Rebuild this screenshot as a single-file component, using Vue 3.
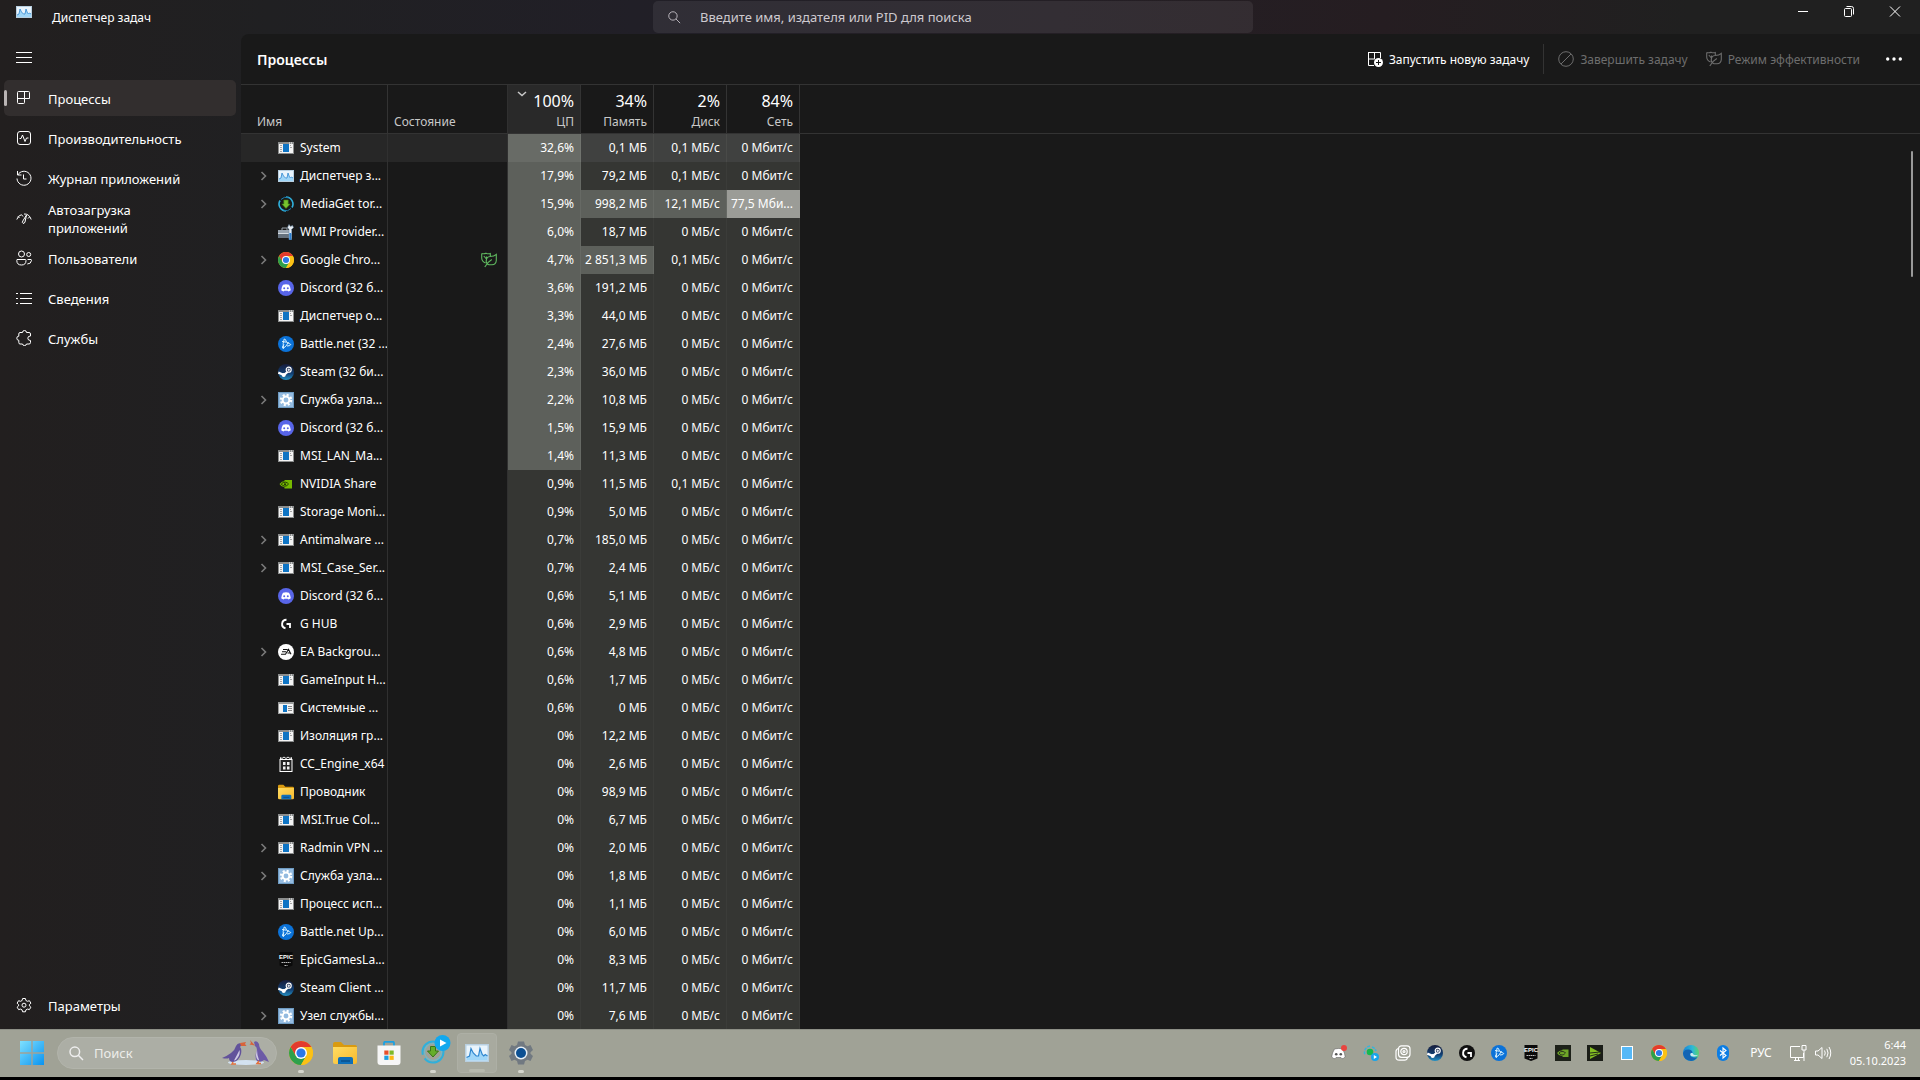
<template>
<svg class="sprite" aria-hidden="true">
    <defs>
        <linearGradient id="winblue" x1="0" y1="0" x2="1" y2="1">
            <stop offset="0" stop-color="#7fe0ff" />
            <stop offset="1" stop-color="#0a93f0" />
        </linearGradient>
        <linearGradient id="steamfill" x1="0" y1="0" x2="0" y2="1">
            <stop offset="0" stop-color="#171d3c" />
            <stop offset="0.6" stop-color="#123f73" />
            <stop offset="1" stop-color="#2391c4" />
        </linearGradient>
        <linearGradient id="folderfill" x1="0" y1="0" x2="1" y2="1">
            <stop offset="0" stop-color="#ffdc62" />
            <stop offset="1" stop-color="#f7b92d" />
        </linearGradient>
        <linearGradient id="edgefill" x1="0" y1="0" x2="1" y2="0">
            <stop offset="0" stop-color="#1684d8" />
            <stop offset="0.6" stop-color="#2fb8d6" />
            <stop offset="1" stop-color="#5bd46a" />
        </linearGradient>
    </defs>

    <!-- process icons -->
    <symbol id="exe" viewBox="0 0 16 16">
        <rect x="0" y="2" width="16" height="12" fill="#8b8d8d" />
        <rect x="1" y="4" width="14" height="9" fill="#f4f4f4" />
        <rect x="5" y="4" width="6" height="8" fill="#0e74c4" />
        <path d="M2 5.500h2M2 7.500h2M2 9.500h2M2 11.500h2M12 5.500h1M12 7.500h2" stroke="#a5a5a5" />
        <path d="M11 3h1M13 3h1" stroke="#fff" />
    </symbol>
    <symbol id="sys" viewBox="0 0 16 16">
        <rect x="0" y="2" width="16" height="12" fill="#9b9d9d" />
        <rect x="1" y="4" width="14" height="9" fill="#f4f4f4" />
        <rect x="5" y="5" width="4" height="7" fill="#0e74c4" />
        <path d="M10 6.500h4M10 8.500h4M10 10.500h4" stroke="#888" />
    </symbol>
    <symbol id="taskmgr" viewBox="0 0 16 16">
        <rect x="0.500" y="2.500" width="15" height="11" fill="#e9f4fc" stroke="#b8cfe0" />
        <path d="M1 11l2-1 1-5 1.500 3 2 2 1.500 0 1-5 1.500 4 1 1 1-1 1.500 1V13H1z" fill="#9fd6f8" />
        <path d="M1 11l2-1 1-5 1.500 3 2 2 1.500 0 1-5 1.500 4 1 1 1-1 1.500 1" fill="none" stroke="#2e86cf" stroke-width="0.800" />
    </symbol>
    <symbol id="mediaget" viewBox="0 0 16 16">
        <path d="M8 1a7 7 0 0 1 6 10.500M8 15A7 7 0 0 1 2 4.500" fill="none" stroke="#2fb0dc" stroke-width="1.600" />
        <path d="M3 3.500A6.700 6.700 0 0 1 10.500 1.800M13 12.500A6.700 6.700 0 0 1 5.500 14.200" fill="none" stroke="#1d7fae" stroke-width="1" />
        <path d="M5.800 4h4.400v4h2L8 12.500 3.800 8h2z" fill="#78c22d" stroke="#3d7d16" stroke-width="0.600" />
    </symbol>
    <symbol id="wmi" viewBox="0 0 16 16">
        <path d="M4 6V4h5v2" fill="none" stroke="#9ba4ac" />
        <rect x="0" y="6" width="14" height="4" fill="#9aa5b0" />
        <rect x="0" y="10" width="14" height="4" fill="#66727e" />
        <path d="M0 9.500h14" stroke="#d4dbe1" />
        <path d="M11 0.500l1.500 2 2-1 1 2-2 2v10h-2.500V5.500l-1.500-2z" fill="#e8edf1" stroke="#6d8ca9" stroke-width="0.600" />
        <rect x="11.300" y="9" width="2" height="7" fill="#2b7fd0" />
    </symbol>
    <symbol id="chrome" viewBox="0 0 24 24">
        <circle cx="12" cy="12" r="12" fill="#fbc116" />
        <path d="M12 6h10.390A12 12 0 0 0 1.610 6L6.800 15z" fill="#e33b2e" />
        <path d="M6.800 15L1.610 6A12 12 0 0 0 12 24l5.200-9z" fill="#2da04c" />
        <path d="M17.200 15L12 24A12 12 0 0 0 22.390 6H12z" fill="#fbc116" />
        <circle cx="12" cy="12" r="6" fill="#fff" />
        <circle cx="12" cy="12" r="4.600" fill="#2b78e8" />
    </symbol>
    <symbol id="discord" viewBox="0 0 16 16">
        <circle cx="8" cy="8" r="8" fill="#5865e8" />
        <path d="M5 4.700Q8 3.900 11 4.700Q12.700 7.300 12.800 10.300Q11.700 11.300 10.200 11.500L9.700 10.700H6.300L5.800 11.500Q4.300 11.300 3.200 10.300Q3.300 7.300 5 4.700z" fill="#fff" />
        <circle cx="6.200" cy="8.300" r="1" fill="#5865e8" />
        <circle cx="9.800" cy="8.300" r="1" fill="#5865e8" />
    </symbol>
    <symbol id="bnet" viewBox="0 0 16 16">
        <circle cx="8" cy="8" r="8" fill="#0b72d8" />
        <g fill="none" stroke="#d9f2ff" stroke-width="1">
            <path d="M5.500 12.500Q4.500 7 6.200 3Q7.500 2.500 8.500 6" />
            <path d="M4 5.500Q9 5.500 12.800 8.500Q12.500 10 9 10" />
            <path d="M10.500 6Q8.500 10.500 5 12.500Q3.300 11.500 6 8.500" />
        </g>
    </symbol>
    <symbol id="steam" viewBox="0 0 16 16">
        <circle cx="8" cy="8" r="8" fill="url(#steamfill)" />
        <path d="M0.300 8.600L6 10.900 10 7.500" fill="none" stroke="#fff" stroke-width="2.200" />
        <circle cx="10.700" cy="5.700" r="2.500" fill="#17264a" stroke="#fff" stroke-width="1.200" />
        <circle cx="10.700" cy="5.700" r="1.200" fill="#dfe6ee" />
        <circle cx="5.700" cy="11" r="2" fill="#fff" />
    </symbol>
    <symbol id="service" viewBox="0 0 16 16">
        <rect x="0.500" y="0.500" width="15" height="15" fill="#94bbe0" stroke="#6e9bc2" />
        <circle cx="8" cy="8" r="5" fill="none" stroke="#fff" stroke-width="2.400" stroke-dasharray="2 1.930" />
        <circle cx="8" cy="8" r="3.400" fill="none" stroke="#fff" stroke-width="2" />
    </symbol>
    <symbol id="nvidia" viewBox="0 0 16 16">
        <rect x="6.500" y="4" width="7.500" height="8.500" fill="#76b900" />
        <path d="M1.500 8Q4 4.500 8 5Q11 5.500 12 8Q10 11.500 6.500 11.300Q3 11 1.500 8z" fill="#76b900" />
        <path d="M3.300 8Q5 5.800 7.500 6.200Q9.700 6.700 10.500 8Q9 10.200 6.800 10.200Q4.500 10 3.300 8z" fill="none" stroke="#1b2a06" stroke-width="0.900" />
        <circle cx="7" cy="8.200" r="1" fill="#1b2a06" />
    </symbol>
    <symbol id="ghub" viewBox="0 0 16 16">
        <path d="M8.500 3.700A4.300 4.300 0 0 0 7.500 12.200" fill="none" stroke="#fff" stroke-width="1.900" />
        <path d="M8.500 8H12v4" fill="none" stroke="#fff" stroke-width="1.800" />
    </symbol>
    <symbol id="ea" viewBox="0 0 16 16">
        <circle cx="8" cy="8" r="8" fill="#fff" />
        <path d="M5 5.500h4.500M4 7.700h4M3 10.300h4.500L10.500 5.300 13 10.300M9.500 9h3" fill="none" stroke="#111" stroke-width="1.100" />
    </symbol>
    <symbol id="engine" viewBox="0 0 16 16">
        <path d="M2.500 4V1.500l1.500 1 2-1.500 2 1.500L10 1l2 1.500 1.500-1V4z" fill="none" stroke="#eee" />
        <rect x="2" y="3.500" width="12" height="12" fill="#222" stroke="#fff" />
        <path d="M5 6h2.500v3H5zM9 6h2.500v3H9zM5 10.500h2.500v3H5zM9 10.500h2.500v3H9z" fill="#eee" />
    </symbol>
    <symbol id="folder" viewBox="0 0 24 22">
        <path d="M0 2Q0 0 2 0H8L11 3H22Q24 3 24 5V9H0z" fill="#d99a10" />
        <path d="M0 5H24V20Q24 22 22 22H2Q0 22 0 20z" fill="url(#folderfill)" />
        <path d="M5 22V17Q5 15 7 15H18Q20 15 20 17V22z" fill="#0f6fb9" />
        <path d="M8 19H17" stroke="#0a4f8c" stroke-width="1.500" />
    </symbol>
    <symbol id="epic" viewBox="0 0 16 16">
        <path d="M1.500 0H14.500V13.500L8 16 1.500 13.500z" fill="#0a0a0a" />
        <path d="M3.500 10.500h9M6.500 13.500h3" stroke="#bbb" stroke-dasharray="1.500 0.500" />
    </symbol>

    <!-- line icons -->
    <symbol id="grid" viewBox="0 0 16 16">
        <path d="M2.500 1.500H12.500Q13.500 1.500 13.500 2.500V8.500H8.500V12.500Q8.500 13.500 7.500 13.500H2.500Q1.500 13.500 1.500 12.500V2.500Q1.500 1.500 2.500 1.500zM8.500 1.500V8.500M1.500 8.500H8.500" />
    </symbol>
    <symbol id="pulse" viewBox="0 0 16 16">
        <rect x="1.500" y="1.500" width="13" height="13" rx="2.500" />
        <path d="M3.500 8.500H5L6.500 5 9 11.500 10.500 8H12.500" />
    </symbol>
    <symbol id="history" viewBox="0 0 16 16">
        <path d="M1.500 1V5H5.500M1.800 5A7 7 0 1 1 1 8.500M7.500 4.500V9H10.500" />
    </symbol>
    <symbol id="gauge" viewBox="0 0 16 16">
        <path d="M0.800 9.500Q2 5.500 5.500 4.700L7 6.500M8 4Q13 3.500 15.200 9.500M13.500 7L12 8.500M2 6.500L3.500 8M10.500 5L6.800 11Q5.800 12.800 7 13.300Q8.300 13.800 9 12z" />
    </symbol>
    <symbol id="users" viewBox="0 0 16 16">
        <circle cx="5.500" cy="4" r="3" />
        <circle cx="12.700" cy="4.500" r="2" />
        <path d="M1 9.500H9.500Q10 9.500 10 10.500Q10 15 5.500 15Q0.800 15 0.800 10.500Q0.800 9.500 1 9.500zM11.500 9.500H15Q15.500 9.500 15.500 10.500Q15 14 11.300 14" />
    </symbol>
    <symbol id="list" viewBox="0 0 16 16">
        <path d="M4 3.500H16M4 8.500H16M4 13.500H16M0 3.500H2M0 8.500H2M0 13.500H2" />
    </symbol>
    <symbol id="puzzle" viewBox="0 0 16 16">
        <path d="M4 2.500H6.500Q6.500 0.500 8.500 0.500Q10.500 0.500 10.500 2.500H13Q14.500 2.500 14.500 4V6Q11.800 6 11.800 8.200Q11.800 10.500 14.500 10.500V12.500Q14.500 14 13 14H10.500Q10.500 15.500 8.500 15.500Q6.500 15.500 6.500 14H4Q2.800 14 2.800 12.500V10.300Q0.800 10.300 0.800 8.200Q0.800 6.200 2.800 6.200V4Q2.800 2.500 4 2.500z" />
    </symbol>
    <symbol id="gear" viewBox="0 0 16 16">
        <path d="M6.600 1.500H9.400L9.900 3.500 11.500 4.300 13.400 3.700 14.900 6.200 13.400 7.600V8.900L14.900 10.200 13.400 12.600 11.500 12.100 9.900 12.900 9.400 14.800H6.600L6.100 12.900 4.500 12.100 2.600 12.600 1.100 10.200 2.600 8.900V7.600L1.100 6.200 2.600 3.700 4.500 4.300 6.100 3.500z" />
        <circle cx="8" cy="8.200" r="2" />
    </symbol>
    <symbol id="burger" viewBox="0 0 16 16">
        <path d="M0 3.500H16M0 8.500H16M0 13.500H16" />
    </symbol>
    <symbol id="search" viewBox="0 0 16 16">
        <circle cx="6.800" cy="6.800" r="4.800" />
        <path d="M10.300 10.300L15 15" />
    </symbol>
    <symbol id="chevron" viewBox="0 0 16 16">
        <path d="M6.500 4L10.500 8 6.500 12" stroke-width="1.600" />
    </symbol>
    <symbol id="leaf" viewBox="0 0 16 16">
        <path d="M0.700 1.500Q3.500 2.200 5 1.200Q7 2.200 9.300 1.500V4.500M0.700 1.500V6Q0.800 9.500 4.500 11M2.800 4L5.500 7V4.500M15.300 2.500V8.500Q15 12.500 11 12.800H8Q5 11.800 5.200 8.800Q5.500 4.800 9 4.500Q13 4.500 15.300 2.500zM3.800 15Q6.500 10 10.800 7.500" stroke-width="1.100" />
    </symbol>
    <symbol id="runnew" viewBox="0 0 16 16">
        <path d="M1 1.500H13.500V7M1.500 1V14.500H7M7.500 1V8M1 8H7.500" />
        <circle cx="11.500" cy="11.500" r="4.500" fill="#fff" stroke="none" />
        <path d="M11.500 9V14M9 11.500H14" stroke="#191919" />
    </symbol>
    <symbol id="ban" viewBox="0 0 16 16">
        <circle cx="8" cy="8" r="7.300" />
        <path d="M13 3L3 13" />
    </symbol>
    <symbol id="network" viewBox="0 0 18 18">
        <path d="M11 2.500H1.500V13.500H14.500V9M5 16.500H11M6.500 13.500V16.500M9.500 13.500V16.500M13 1.500H17V6H13zM15 6V17" />
    </symbol>
    <symbol id="volume" viewBox="0 0 18 18">
        <path d="M1.500 7H4L8 3.500V14.500L4 11H1.500zM10.500 6.500Q12 9 10.500 11.500M12.800 4.800Q15.300 9 12.800 13.200M15 3Q18.500 9 15 15" />
    </symbol>

    <!-- taskbar only -->
    <symbol id="start" viewBox="0 0 24 24">
        <path d="M0 0H11.300V11.300H0zM12.700 0H24V11.300H12.700zM0 12.700H11.300V24H0zM12.700 12.700H24V24H12.700z" fill="url(#winblue)" />
    </symbol>
    <symbol id="store" viewBox="0 0 24 24">
        <path d="M7 5V2Q7 0.800 8.200 0.800H15.800Q17 0.800 17 2V5" fill="none" stroke="#1ba0e2" stroke-width="1.800" />
        <path d="M0.500 4.500H23.500V21Q23.500 24 20.500 24H3.500Q0.500 24 0.500 21z" fill="#f6f6f6" />
        <path d="M7.300 9.500h4.200v4.200H7.300z" fill="#e8502a" />
        <path d="M12.500 9.500h4.200v4.200h-4.200z" fill="#7eb928" />
        <path d="M7.300 14.700h4.200v4.200H7.300z" fill="#1d9fe0" />
        <path d="M12.500 14.700h4.200v4.200h-4.200z" fill="#fdb813" />
    </symbol>
    <symbol id="mediagetbig" viewBox="0 0 30 30">
        <circle cx="12" cy="17" r="10.500" fill="none" stroke="#2fb0dc" stroke-width="2" stroke-dasharray="26 4" />
        <circle cx="12" cy="17" r="8.500" fill="none" stroke="#71b9cc" stroke-width="1.200" />
        <path d="M9.500 11.500h5v4.500h3L12 22 6.500 16h3z" fill="#66ae2a" stroke="#39741a" />
        <circle cx="21.500" cy="8" r="8" fill="#12a8ee" />
        <path d="M19 4.500L25.500 8 19 11.500z" fill="#fff" />
    </symbol>
    <symbol id="settings" viewBox="0 0 24 24">
        <path d="M9 0.500H15L16 4 18.500 5.200 21.500 4 24 9 21.500 11.300V12.700L24 15 21.500 20 18.500 18.800 16 20 15 23.500H9L8 20 5.500 18.800 2.500 20 0 15 2.500 12.700V11.300L0 9 2.500 4 5.500 5.200 8 4z" fill="#717981" />
        <circle cx="12" cy="12" r="6.500" fill="#e6eef5" />
        <circle cx="12" cy="12" r="5" fill="#0b4f93" />
    </symbol>
    <symbol id="penguins" viewBox="0 0 50 28">
        <ellipse cx="25" cy="23.500" rx="18" ry="2.500" fill="#d3e2f0" />
        <path d="M21 5Q17 3 15 7Q14 11 10 14Q6 17 1 19Q6 20 8 19Q8 23 12 23Q18 22 20 15Q21 10 19 8z" fill="#62529b" />
        <path d="M18.500 11Q19.500 15 16.500 19Q14.500 22 13 21.500Q16 16 18.500 11z" fill="#cfc9e4" />
        <path d="M19 4L25 3 24 5 25.500 7 20 7z" fill="#d9633a" />
        <path d="M33 3Q36 1 38 5Q38 9 42 13Q46 18 48 23L43 21Q40 24 36 22Q33 18 36 11Q36 8 34 7z" fill="#6c5aa6" />
        <path d="M36 11Q34 16 36 20Q37 21.500 38 21Q36 16 36 11z" fill="#cfc9e4" />
        <path d="M34 6.500L29 1 30 4 28.500 5.500z" fill="#d9633a" />
        <path d="M12 23l-1 2h4M38 22l-2 2.500h4" fill="none" stroke="#e4713b" stroke-width="1.500" />
    </symbol>
    <symbol id="traydiscord" viewBox="0 0 16 16">
        <path d="M3.500 4Q8 2.800 11.500 4Q14 8 14.200 12Q12.500 13.600 11 13.800L10 12.500H5L4 13.800Q2.300 13.600 0.700 12Q1 8 3.500 4z" fill="#fff" stroke="#555" stroke-width="0.500" />
        <circle cx="5.200" cy="9.200" r="1.300" fill="#555" />
        <circle cx="9.800" cy="9.200" r="1.300" fill="#555" />
        <circle cx="13" cy="3" r="3" fill="#e8443f" />
    </symbol>
    <symbol id="traymedia" viewBox="0 0 16 16">
        <path d="M7 1A6.500 6.500 0 0 0 2 10M9 2Q12 3 13 6" fill="none" stroke="#35b5dc" stroke-width="1.500" stroke-dasharray="3 1" />
        <circle cx="7" cy="7" r="3.300" fill="#16b94b" />
        <circle cx="12" cy="12" r="4" fill="#18a5ea" />
        <path d="M10.800 10L14 12 10.800 14z" fill="#fff" />
    </symbol>
    <symbol id="traycopy" viewBox="0 0 16 16">
        <g fill="none" stroke="#fff" stroke-width="1.200">
            <rect x="3.500" y="0.800" width="11.500" height="11.500" rx="3" />
            <path d="M3.500 3.500Q1 4 1 6.500V12Q1 15.200 4.200 15.200H9.500Q12 15.200 12.500 12.500" />
            <circle cx="9" cy="6.500" r="3.200" />
            <circle cx="9" cy="6.500" r="1" />
        </g>
    </symbol>
    <symbol id="trayghub" viewBox="0 0 16 16">
        <circle cx="8" cy="8" r="8" fill="#101010" />
        <path d="M8.500 3.700A4.300 4.300 0 0 0 7.500 12.200" fill="none" stroke="#fff" stroke-width="1.900" />
        <path d="M8.500 8H12v4" fill="none" stroke="#fff" stroke-width="1.800" />
    </symbol>
    <symbol id="traynvidia" viewBox="0 0 16 16">
        <rect width="16" height="16" fill="#1d2119" />
        <rect x="7.500" y="4.500" width="6" height="7.500" fill="#6fa628" />
        <path d="M2 8Q4.500 4.800 8 5.200Q11 5.700 12 8Q10 11.300 7 11.100Q3.500 10.800 2 8z" fill="#6fa628" />
        <path d="M4 8Q5.500 6 8 6.500Q10 7 10.500 8Q9 10 7 10Q5 9.800 4 8z" fill="none" stroke="#1d2119" stroke-width="0.800" />
    </symbol>
    <symbol id="trayplay" viewBox="0 0 16 16">
        <rect width="16" height="16" fill="#1a1d17" />
        <path d="M3 2L14 8 3 14z" fill="#84bd22" />
        <path d="M3 8L13 7M3 11L11 9" stroke="#1a1d17" stroke-width="0.900" />
    </symbol>
    <symbol id="traysquare" viewBox="0 0 16 16">
        <rect x="2.500" y="1.500" width="11" height="13" fill="#55b8f7" stroke="#fff" />
    </symbol>
    <symbol id="edge" viewBox="0 0 16 16">
        <circle cx="8" cy="8" r="8" fill="url(#edgefill)" />
        <path d="M0 8.500Q1 4 6 4.500Q9.500 5 9.500 8Q7.500 7.500 7 9.500Q7 13 14.500 12.300Q12 16 8 16Q1 15.500 0 8.500z" fill="#1464b4" />
        <path d="M9.500 8Q7.500 7.500 7.300 9.300Q7.500 11.500 11 11.500Q14 11.500 15.500 9.500Q14 10.500 11.500 10Q9.800 9.500 9.500 8z" fill="#cfe9ee" />
    </symbol>
    <symbol id="bluetooth" viewBox="0 0 16 16">
        <rect x="2" width="12" height="16" rx="6" fill="#0b7de4" />
        <path d="M5 5.500L11 10.500 8 13V3L11 5.500 5 10.500" fill="none" stroke="#fff" stroke-width="1.100" />
    </symbol>
</svg>

<div class="desktop">
    <div class="window">
        <header class="titlebar">
            <div class="titlebar__name">
                <svg class="icon"><use href="#taskmgr" /></svg>
                <span>Диспетчер задач</span>
            </div>
            <label class="search">
                <svg class="icon line"><use href="#search" /></svg>
                <input type="text" v-model="query" placeholder="Введите имя, издателя или PID для поиска" aria-label="Поиск процессов">
            </label>
            <div class="titlebar__controls">
                <button aria-label="Свернуть"><svg class="ctl line" viewBox="0 0 12 12"><path d="M1 6.500H11" /></svg></button>
                <button aria-label="Восстановить"><svg class="ctl line" viewBox="0 0 12 12"><rect x="1.500" y="3.500" width="7" height="8" rx="1" /><path d="M3.500 1.500H8.500Q10.500 1.500 10.500 3.500V9.500" /></svg></button>
                <button aria-label="Закрыть"><svg class="ctl line" viewBox="0 0 12 12"><path d="M1 1.500L11 11.500M11 1.500L1 11.500" /></svg></button>
            </div>
        </header>

        <div class="body">
            <nav class="sidebar">
                <button class="burger" aria-label="Меню"><svg class="icon line"><use href="#burger" /></svg></button>
                <button v-for="item in menu" :key="item.icon" class="nav" :class="{ active: item.icon === page }" @click="page = item.icon">
                    <svg class="icon line"><use :href="'#' + item.icon" /></svg>
                    <span>{{ item.text }}</span>
                </button>
                <button class="nav nav--bottom">
                    <svg class="icon line"><use href="#gear" /></svg>
                    <span>Параметры</span>
                </button>
            </nav>

            <main class="content">
                <div class="toolbar">
                    <h1>Процессы</h1>
                    <button class="tool tool--main"><svg class="icon line"><use href="#runnew" /></svg>Запустить новую задачу</button>
                    <span class="separator"></span>
                    <button class="tool" disabled><svg class="icon line"><use href="#ban" /></svg>Завершить задачу</button>
                    <button class="tool" disabled><svg class="icon line"><use href="#leaf" /></svg>Режим эффективности</button>
                    <button class="more" aria-label="Дополнительно"><svg class="icon" viewBox="0 0 16 16"><path d="M0 8a1.700 1.700 0 1 1 3.400 0a1.700 1.700 0 1 1-3.400 0M6.300 8a1.700 1.700 0 1 1 3.400 0a1.700 1.700 0 1 1-3.400 0M12.600 8a1.700 1.700 0 1 1 3.400 0a1.700 1.700 0 1 1-3.400 0" fill="#fff" /></svg></button>
                </div>
                <div class="list">
                    <table>
                        <colgroup>
                            <col class="col-name"><col class="col-state">
                            <col class="col-num"><col class="col-num"><col class="col-num"><col class="col-num">
                            <col>
                        </colgroup>
                        <thead>
                            <tr>
                                <th class="left">Имя</th>
                                <th class="left state">Состояние</th>
                                <th class="sorted"><svg class="sort line" viewBox="0 0 10 6"><path d="M1 1L5 4.500 9 1" /></svg><b>100%</b>ЦП</th>
                                <th><b>34%</b>Память</th>
                                <th><b>2%</b>Диск</th>
                                <th><b>84%</b>Сеть</th>
                                <th></th>
                            </tr>
                        </thead>
                        <tbody>
                            <tr v-for="(p, i) in processes" :key="i" :class="{ hover: i === 0 }">
                                <td class="name">
                                    <div class="name__inner">
                                        <svg class="arrow line"><use v-if="p.group" href="#chevron" /></svg>
                                        <svg class="icon" viewBox="0 0 16 16">
                                            <use :href="'#' + p.icon" />
                                            <text v-if="p.icon === 'epic'" class="epic" x="8" y="7">EPIC</text>
                                        </svg>
                                        <span>{{ p.name }}</span>
                                    </div>
                                </td>
                                <td class="state"><svg v-if="p.eco" class="eco line"><use href="#leaf" /></svg></td>
                                <td class="num" :class="{ warm: i < 12 }">{{ p.cpu }}%</td>
                                <td class="num" :class="{ warm: p.mem === '998,2' || p.mem === '2 851,3' }">{{ p.mem }} МБ</td>
                                <td class="num" :class="{ warm: p.disk === '12,1' }">{{ p.disk }} МБ/с</td>
                                <td class="num" :class="{ hot: p.net !== '0 Мбит/с' }">{{ p.net }}</td>
                                <td></td>
                            </tr>
                        </tbody>
                    </table>
                    <div class="thumb"></div>
                </div>
            </main>
        </div>
    </div>

    <footer class="taskbar">
        <button class="start" aria-label="Пуск"><svg class="start__icon"><use href="#start" /></svg></button>
        <label class="find">
            <svg class="icon line"><use href="#search" /></svg>
            <input type="text" placeholder="Поиск" aria-label="Поиск">
            <svg class="penguins"><use href="#penguins" /></svg>
        </label>
        <button v-for="item in pinned" :key="item.icon" class="pin" :class="{ open: item.open, current: item.current }" :aria-label="item.name">
            <svg :class="item.big ? 'pin__big' : 'pin__icon'"><use :href="'#' + item.icon" /></svg>
        </button>
        <div class="tray">
            <button v-for="t in tray" :key="t" class="tray__item" :aria-label="t">
                <svg class="icon" viewBox="0 0 16 16">
                    <use :href="'#' + t" />
                    <text v-if="t === 'epic'" class="epic" x="8" y="7">EPIC</text>
                </svg>
            </button>
            <button class="lang">РУС</button>
            <button class="status" aria-label="Сеть и звук">
                <svg class="status__icon line"><use href="#network" /></svg>
                <svg class="status__icon line"><use href="#volume" /></svg>
            </button>
            <div class="clock"><span>6:44</span><span>05.10.2023</span></div>
        </div>
    </footer>
</div>
</template>

<script setup>
import { ref } from 'vue'

const query = ref('')
const page = ref('grid')

const menu = [
    { icon: 'grid', text: 'Процессы' },
    { icon: 'pulse', text: 'Производительность' },
    { icon: 'history', text: 'Журнал приложений' },
    { icon: 'gauge', text: 'Автозагрузка приложений' },
    { icon: 'users', text: 'Пользователи' },
    { icon: 'list', text: 'Сведения' },
    { icon: 'puzzle', text: 'Службы' }
]

// icon, name, cpu, memory, disk, network, flags: g - group, e - efficiency mode
const rows = [
    ['exe', 'System', '32,6', '0,1', '0,1'],
    ['taskmgr', 'Диспетчер з...', '17,9', '79,2', '0,1', '0 Мбит/с', 'g'],
    ['mediaget', 'MediaGet tor...', '15,9', '998,2', '12,1', '77,5 Мби...', 'g'],
    ['wmi', 'WMI Provider...', '6,0', '18,7', '0'],
    ['chrome', 'Google Chro...', '4,7', '2 851,3', '0,1', '0 Мбит/с', 'ge'],
    ['discord', 'Discord (32 б...', '3,6', '191,2', '0'],
    ['exe', 'Диспетчер о...', '3,3', '44,0', '0'],
    ['bnet', 'Battle.net (32 ...', '2,4', '27,6', '0'],
    ['steam', 'Steam (32 би...', '2,3', '36,0', '0'],
    ['service', 'Служба узла...', '2,2', '10,8', '0', '0 Мбит/с', 'g'],
    ['discord', 'Discord (32 б...', '1,5', '15,9', '0'],
    ['exe', 'MSI_LAN_Ma...', '1,4', '11,3', '0'],
    ['nvidia', 'NVIDIA Share', '0,9', '11,5', '0,1'],
    ['exe', 'Storage Moni...', '0,9', '5,0', '0'],
    ['exe', 'Antimalware ...', '0,7', '185,0', '0', '0 Мбит/с', 'g'],
    ['exe', 'MSI_Case_Ser...', '0,7', '2,4', '0', '0 Мбит/с', 'g'],
    ['discord', 'Discord (32 б...', '0,6', '5,1', '0'],
    ['ghub', 'G HUB', '0,6', '2,9', '0'],
    ['ea', 'EA Backgrou...', '0,6', '4,8', '0', '0 Мбит/с', 'g'],
    ['exe', 'GameInput H...', '0,6', '1,7', '0'],
    ['sys', 'Системные ...', '0,6', '0', '0'],
    ['exe', 'Изоляция гр...', '0', '12,2', '0'],
    ['engine', 'CC_Engine_x64', '0', '2,6', '0'],
    ['folder', 'Проводник', '0', '98,9', '0'],
    ['exe', 'MSI.True Col...', '0', '6,7', '0'],
    ['exe', 'Radmin VPN ...', '0', '2,0', '0', '0 Мбит/с', 'g'],
    ['service', 'Служба узла...', '0', '1,8', '0', '0 Мбит/с', 'g'],
    ['exe', 'Процесс исп...', '0', '1,1', '0'],
    ['bnet', 'Battle.net Up...', '0', '6,0', '0'],
    ['epic', 'EpicGamesLa...', '0', '8,3', '0'],
    ['steam', 'Steam Client ...', '0', '11,7', '0'],
    ['service', 'Узел службы...', '0', '7,6', '0', '0 Мбит/с', 'g']
]
const processes = rows.map(([icon, name, cpu, mem, disk, net = '0 Мбит/с', flags = '']) => ({
    icon, name, cpu, mem, disk, net,
    group: flags.includes('g'),
    eco: flags.includes('e')
}))

const pinned = [
    { icon: 'chrome', name: 'Google Chrome', open: true },
    { icon: 'folder', name: 'Проводник' },
    { icon: 'store', name: 'Microsoft Store' },
    { icon: 'mediagetbig', name: 'MediaGet', open: true, big: true },
    { icon: 'taskmgr', name: 'Диспетчер задач', open: true, current: true },
    { icon: 'settings', name: 'Параметры', open: true }
]
const tray = ['traydiscord', 'traymedia', 'traycopy', 'steam', 'trayghub', 'bnet', 'epic', 'traynvidia', 'trayplay', 'traysquare', 'chrome', 'edge', 'bluetooth']
</script>

<style>
body{
    background-color: black;
}
</style>

<style scoped>
*{
    box-sizing: border-box;
}
button, input{
    font: inherit;
    color: inherit;
    background: none;
    border: none;
    padding: 0;
    outline: none;
}
.sprite{
    position: absolute;
    width: 0;
    height: 0;
}
.desktop{
    display: flex;
    flex-direction: column;
    height: 100vh;
    padding-bottom: 3px;
    font-family: 'Noto Sans', 'Open Sans', sans-serif;
    font-size: 12px;
    color: #fff;
}
.icon{
    width: 16px;
    height: 16px;
    flex-shrink: 0;
}
.line{
    fill: none;
    stroke: currentColor;
}
.epic{
    font: 700 6px 'Liberation Sans', sans-serif;
    text-anchor: middle;
    fill: #fff;
}

/* window */
.window{
    flex: 1;
    min-height: 0;
    display: flex;
    flex-direction: column;
    background: linear-gradient(90deg, #221f1f 0%, #202022 14%, #211f27 33%, #241f25 55%, #251d21 72%, #202020 88%);
}
.titlebar{
    height: 34px;
    flex-shrink: 0;
    display: grid;
    grid-template-columns: 1fr 600px 1fr;
    padding-right: 14px;
}
.titlebar__name{
    display: flex;
    gap: 20px;
    padding: 4px 0 0 16px;
    line-height: 28px;
}
.search{
    display: flex;
    align-items: center;
    gap: 19px;
    height: 32px;
    margin-top: 1px;
    padding-left: 14px;
    border-radius: 5px;
    background-color: rgba(255, 255, 255, 0.07);
    color: #c9c5cb;
    font-size: 13px;
}
.search input{
    flex: 1;
}
.search input::placeholder{
    color: #cdc9cf;
    opacity: 1;
}
.search .icon{
    width: 14px;
    height: 14px;
}
.titlebar__controls{
    display: flex;
    justify-content: flex-end;
    margin-right: -12px;
}
.titlebar__controls button{
    width: 46px;
    height: 22px;
}
.ctl{
    display: block;
    width: 12px;
    height: 12px;
    margin: auto;
}
.body{
    flex: 1;
    min-height: 0;
    display: flex;
}

/* sidebar */
.sidebar{
    width: 241px;
    flex-shrink: 0;
    display: flex;
    flex-direction: column;
    gap: 4px;
    padding: 4px 5px 6px 4px;
}
.burger{
    height: 38px;
    padding-left: 12px;
    text-align: left;
}
.burger .icon{
    display: block;
}
.nav{
    position: relative;
    display: flex;
    align-items: center;
    gap: 16px;
    height: 36px;
    flex-shrink: 0;
    padding: 0 40px 0 12px;
    border-radius: 5px;
    font-size: 13px;
    line-height: 18px;
    text-align: left;
}
.nav span{
    padding-top: 2px;
}
.nav.active{
    background-color: #322e2e;
}
.nav.active::before{
    content: '';
    position: absolute;
    left: 0;
    width: 3px;
    height: 16px;
    border-radius: 2px;
    background-color: #b9b4b4;
}
.nav--bottom{
    margin-top: auto;
}

/* content */
.content{
    flex: 1;
    min-width: 0;
    display: flex;
    flex-direction: column;
    border-top-left-radius: 8px;
    background-color: #191919;
}
.toolbar{
    display: flex;
    align-items: center;
    height: 51px;
    flex-shrink: 0;
    padding: 0 18px 0 16px;
    border-bottom: 1px solid #333;
}
h1{
    margin: 0 auto 0 0;
    font-size: 14px;
    font-weight: 600;
}
.tool{
    display: flex;
    align-items: center;
    gap: 6px;
    margin-left: 18px;
    color: #6d6d6d;
}
.tool--main{
    color: #fff;
}
.separator{
    width: 1px;
    height: 30px;
    margin: 0 -4px 0 14px;
    background-color: #333;
}
.more{
    margin-left: 26px;
    height: 16px;
}
.list{
    position: relative;
    flex: 1;
    min-height: 0;
    overflow: hidden;
}
table{
    width: 100%;
    table-layout: fixed;
    border-collapse: separate;
    border-spacing: 0;
}
.col-name{
    width: 147px;
}
.col-state{
    width: 120px;
}
.col-num{
    width: 73px;
}
th{
    position: relative;
    height: 49px;
    padding: 0 6px 1px 0;
    border-right: 1px solid #333;
    border-bottom: 1px solid #333;
    vertical-align: bottom;
    text-align: right;
    font-weight: 400;
    line-height: 20px;
    color: #c8c8c8;
}
th b{
    display: block;
    font-size: 16px;
    font-weight: 400;
    line-height: 22px;
    color: #fff;
}
th.left{
    padding-left: 16px;
    text-align: left;
}
th.left.state{
    padding-left: 6px;
}
th:last-child{
    border-right: none;
}
.sorted{
    background-color: #292929;
}
.sort{
    position: absolute;
    top: 6px;
    left: 9px;
    width: 10px;
    height: 6px;
    stroke-width: 1.5;
}
td{
    height: 28px;
    padding: 0;
    white-space: nowrap;
}
.name, .state{
    border-right: 1px solid #303030;
}
td.state{
    padding-right: 10px;
    text-align: right;
}
.name__inner{
    display: flex;
    align-items: center;
    padding-left: 14px;
    overflow: hidden;
}
.name__inner .icon{
    margin: 0 6px 0 7px;
}
.name__inner span{
    padding-bottom: 2px;
}
.arrow{
    width: 16px;
    height: 16px;
    flex-shrink: 0;
    color: #7a7a7a;
}
.eco{
    display: block;
    width: 16px;
    height: 16px;
    margin-left: auto;
    color: #5fb85f;
}
.num{
    padding: 0 6px 2px 0;
    border-right: 1px solid #3b3c39;
    background-color: #353633;
    text-align: right;
}
.num.warm{
    border-color: #666964;
    background-color: #5d605b;
}
.num.hot{
    border-color: #9b9c97;
    background-color: #9b9c97;
}
.hover .name, .hover .state{
    background-color: #272727;
}
.hover .num{
    border-color: #494a48;
    background-color: #404140;
}
.hover .num.warm{
    border-color: #70736e;
    background-color: #686b66;
}
.thumb{
    position: absolute;
    top: 66px;
    right: 7px;
    width: 2px;
    height: 126px;
    border-radius: 1px;
    background-color: #9a9a9a;
}

/* taskbar */
.taskbar{
    display: flex;
    align-items: center;
    height: 48px;
    flex-shrink: 0;
    padding: 0 14px 2px 10px;
    border-top: 1px solid #8d8f86;
    background-color: #a0a296;
}
.start{
    width: 44px;
    height: 44px;
}
.start__icon{
    display: block;
    width: 24px;
    height: 24px;
    margin: auto;
}
.find{
    display: flex;
    align-items: center;
    gap: 10px;
    width: 220px;
    height: 32px;
    margin: 0 2px 0 3px;
    padding: 0 5px 0 10px;
    border: 1px solid #b2b4ab;
    border-radius: 16px;
    background-color: #acaea5;
    font-size: 13px;
    color: #eee;
}
.find input{
    flex: 1;
    min-width: 0;
}
.find input::placeholder{
    color: #ededea;
    opacity: 1;
}
.find .icon{
    stroke-width: 1.5;
}
.penguins{
    width: 50px;
    height: 28px;
}
.pin{
    position: relative;
    width: 40px;
    height: 40px;
    margin: 0 2px;
    border-radius: 4px;
}
.pin__icon{
    display: block;
    width: 24px;
    height: 24px;
    margin: auto;
}
.pin__big{
    display: block;
    width: 30px;
    height: 30px;
    margin: 0 0 6px 8px;
}
.pin.open::after{
    content: '';
    position: absolute;
    left: 17px;
    bottom: 0;
    width: 6px;
    height: 3px;
    border-radius: 2px;
    background-color: #d4d5cd;
}
.pin.current{
    background-color: #a8aa9f;
    border: 1px solid #adafa5;
}
.pin.current::after{
    left: 11px;
    width: 16px;
    background-color: #b7b9ae;
}
.tray{
    display: flex;
    align-items: center;
    margin-left: auto;
}
.tray__item{
    width: 32px;
    height: 40px;
}
.tray__item .icon{
    display: block;
    margin: auto;
}
.lang{
    width: 44px;
}
.status{
    display: flex;
    gap: 7px;
    margin: 0 14px 0 6px;
}
.status__icon{
    width: 18px;
    height: 18px;
}
.clock{
    display: flex;
    flex-direction: column;
    width: 60px;
    text-align: right;
    font-size: 11px;
    line-height: 16px;
}
</style>
